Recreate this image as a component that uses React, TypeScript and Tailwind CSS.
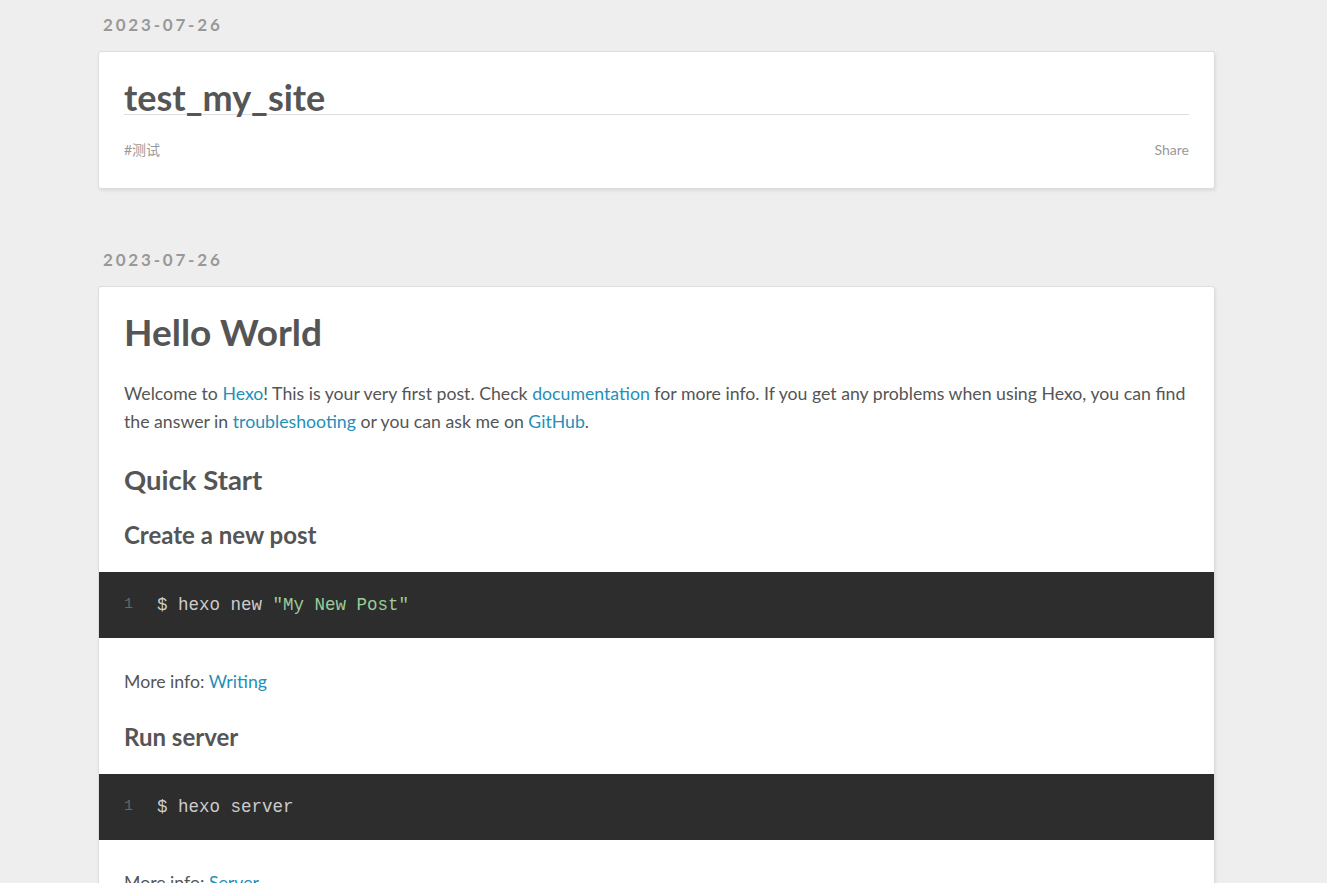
import React from "react";

const font = { fontFamily: "Lato, 'Noto Sans CJK SC', sans-serif" };

const A = ({ children }: { children: React.ReactNode }) => (
  <a href="#" className="text-[#258fb8]">
    {children}
  </a>
);

const Code = ({ children }: { children: React.ReactNode }) => (
  <div className="bg-[#2d2d2d] h-[66px] flex items-center px-[25px] font-['Liberation_Mono',monospace] text-[17.5px]">
    <span className="text-[#666] w-[33px] text-[15px]">1</span>
    <span className="text-[#ccc]">{children}</span>
  </div>
);

const DateLabel = ({ children }: { children: React.ReactNode }) => (
  <div className="pl-[5px] pt-[15px] pb-[16px] leading-[20px] text-[#999] font-bold text-[17px] tracking-[2.8px]">
    {children}
  </div>
);

export default function App() {
  return (
    <div className="min-h-screen bg-[#eee] text-[#555]" style={font}>
      <div className="w-[1117px] ml-[98px]">
        <DateLabel>2023-07-26</DateLabel>
        <div className="bg-white border border-[#ddd] rounded-[3px] shadow-[1px_2px_3px_#ddd] px-[25px] pt-[28px] pb-[28px]">
          <h1 className="text-[36px] font-bold leading-[34px] border-b border-[#ddd]">test_my_site</h1>
          <div className="flex justify-between mt-[25px] leading-[20px] text-[14px] text-[#999]">
            <span>#测试</span>
            <span>Share</span>
          </div>
        </div>

        <div className="h-[46px]" />
        <DateLabel>2023-07-26</DateLabel>
        <div className="bg-white border border-[#ddd] rounded-[3px] shadow-[1px_2px_3px_#ddd]">
          <div className="px-[25px] pt-[25px]">
            <h1 className="text-[37px] font-bold leading-[40px]">Hello World</h1>
            <p className="mt-[28px] text-[17.7px] leading-[28px]">
              Welcome to <A>Hexo</A>! This is your very first post. Check <A>documentation</A> for more info. If you get any problems when using Hexo, you can find the answer in <A>troubleshooting</A> or you can ask me on <A>GitHub</A>.
            </p>
            <h2 className="mt-[28px] text-[27.5px] font-bold leading-[32px]">Quick Start</h2>
            <h3 className="mt-[25px] text-[24px] font-bold leading-[28px]">Create a new post</h3>
          </div>
          <div className="mt-[23px]">
            <Code>
              $ hexo new <span className="text-[#99cc99]">"My New Post"</span>
            </Code>
          </div>
          <div className="px-[25px]">
            <p className="mt-[30px] text-[17.7px] leading-[28px]">
              More info: <A>Writing</A>
            </p>
            <h3 className="mt-[27px] text-[24px] font-bold leading-[28px]">Run server</h3>
          </div>
          <div className="mt-[23px]">
            <Code>$ hexo server</Code>
          </div>
          <div className="px-[25px] pb-[30px]">
            <p className="mt-[29px] text-[17.7px] leading-[28px]">
              More info: <A>Server</A>
            </p>
          </div>
        </div>
      </div>
    </div>
  );
}
